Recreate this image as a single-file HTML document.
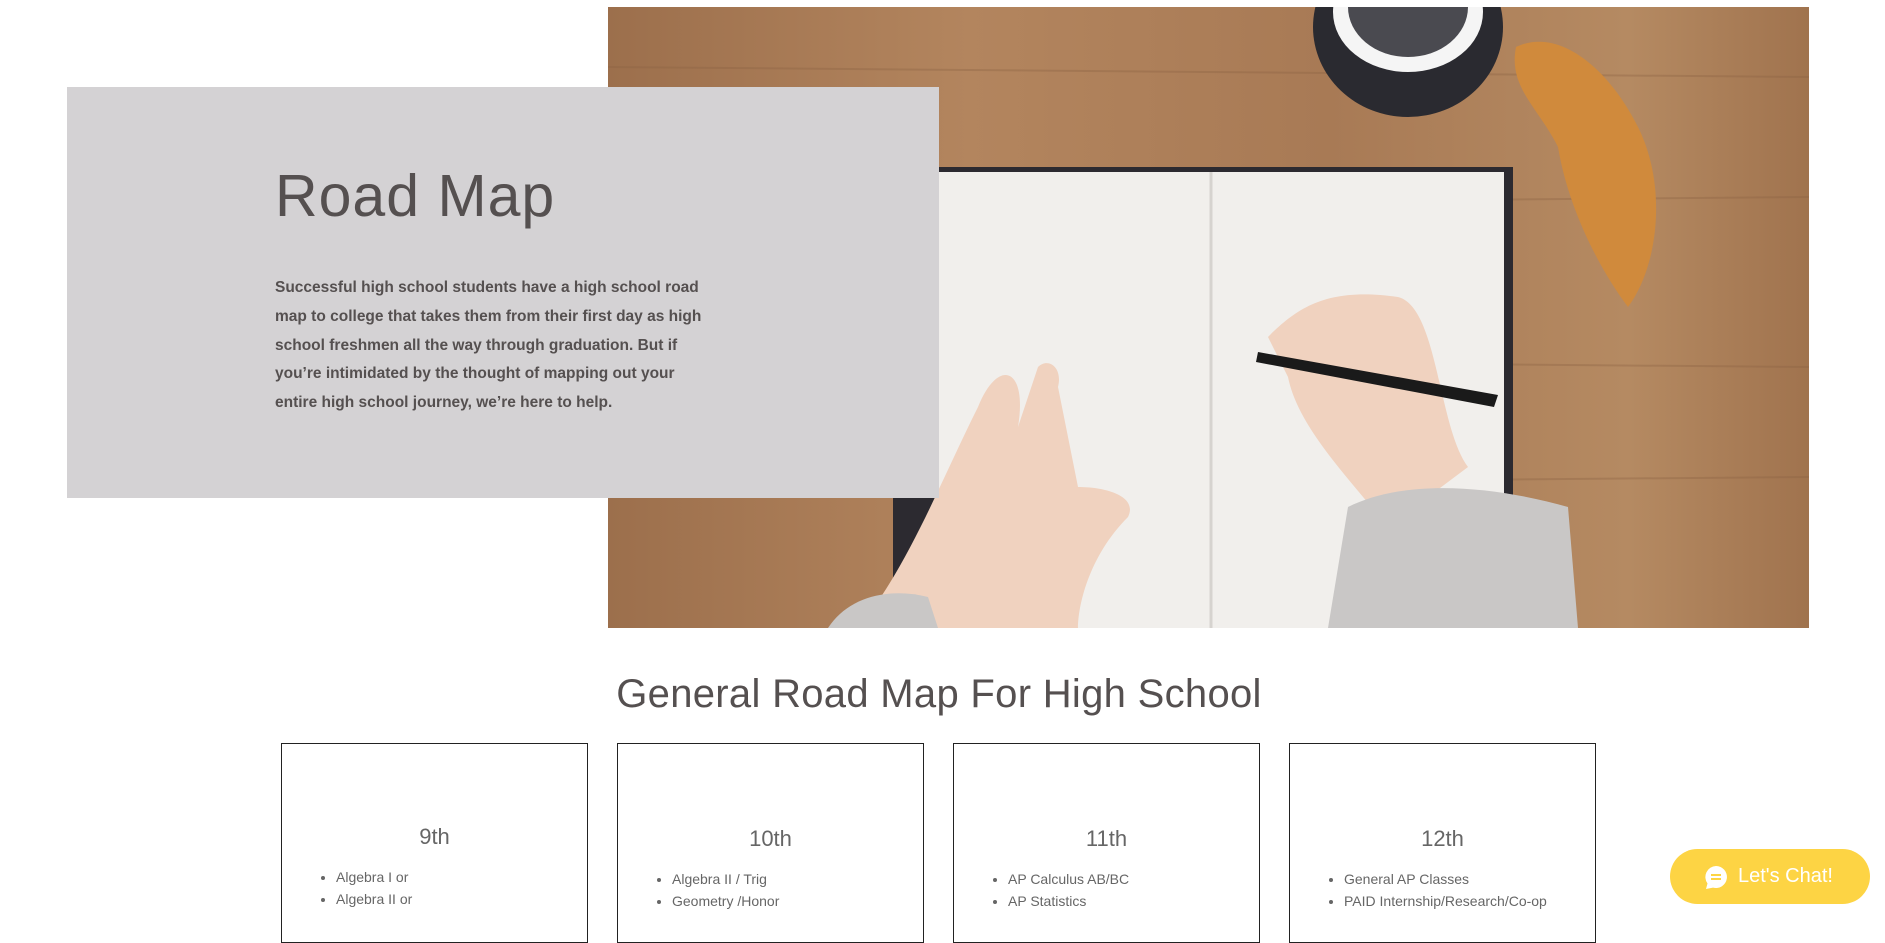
<!DOCTYPE html>
<html><head><meta charset="utf-8"><style>
body{margin:0;width:1885px;height:919px;overflow:hidden;background:#fff;position:relative;font-family:"Liberation Sans",sans-serif;}
.abs{position:absolute}
.img{left:608px;top:7px;width:1201px;height:621px;overflow:hidden;background:linear-gradient(90deg,#9c6f4c,#b3855e 30%,#a87a55 60%,#b58a62 85%,#a0734e)}
.gray{left:67px;top:87px;width:872px;height:411px;background:#d4d2d4}
h1{position:absolute;left:275px;top:162px;margin:0;font-weight:300;font-size:59px;color:#555050;letter-spacing:1px}
.p{left:275px;top:274px;width:432px;font-size:15.5px;line-height:28.75px;font-weight:bold;color:#555050}
h2{position:absolute;left:606px;width:666px;text-align:center;top:672px;margin:0;font-weight:normal;font-size:40px;color:#555050;letter-spacing:0.3px;white-space:nowrap}
.box{top:743px;width:307px;height:200px;border:1px solid #222;box-sizing:border-box}
.box .t{position:absolute;top:80px;width:100%;text-align:center;font-size:22px;color:#666}
.box ul{position:absolute;top:122px;left:40px;margin:0;padding-left:14px;font-size:14px;color:#666;line-height:22px}
.chat{left:1670px;top:849px;width:200px;height:55px;border-radius:28px;background:#fdd444;color:#fff;font-size:20px;line-height:55px}
</style></head><body>
<div class="abs img">
<svg width="1201" height="621" viewBox="0 0 1201 621">
<g stroke="#8b6243" stroke-width="2" opacity=".35"><line x1="0" y1="60" x2="1201" y2="70"/><line x1="0" y1="200" x2="1201" y2="190"/><line x1="0" y1="350" x2="1201" y2="360"/><line x1="0" y1="480" x2="1201" y2="470"/></g>
<ellipse cx="800" cy="20" rx="95" ry="90" fill="#2a2a30"/>
<ellipse cx="800" cy="5" rx="75" ry="60" fill="#f5f5f5"/>
<ellipse cx="800" cy="0" rx="60" ry="50" fill="#4a4a50"/>
<path d="M908 40 C950 20 1000 60 1030 120 C1060 180 1050 260 1020 300 C990 260 960 200 950 140 C930 100 900 80 908 40Z" fill="#d08a3c"/>
<rect x="285" y="160" width="620" height="461" fill="#2c2a30"/>
<rect x="330" y="165" width="566" height="456" fill="#f1efec"/>
<line x1="603" y1="165" x2="603" y2="621" stroke="#d6d3cf" stroke-width="3"/>
<path d="M250 621 C300 560 330 480 370 400 C390 350 420 360 410 420 L430 360 C440 350 455 360 450 380 L470 480 C500 480 530 490 520 510 C480 550 470 600 470 621Z" fill="#f0d2bf"/>
<path d="M660 330 C690 300 720 280 790 290 C830 300 830 420 860 460 L780 520 C740 470 690 420 680 370Z" fill="#f0d2bf"/>
<path d="M650 345 L890 388 L886 400 L648 355Z" fill="#1a1a1a"/>
<path d="M740 500 C800 470 890 480 960 500 L970 621 L720 621Z" fill="#c9c7c6"/>
<path d="M220 621 C240 590 280 580 320 590 L330 621Z" fill="#c9c7c6"/>
</svg>
</div>
<div class="abs gray"></div>
<h1>Road Map</h1>
<div class="abs p">Successful high school students have a high school road map to college that takes them from their first day as high school freshmen all the way through graduation. But if you’re intimidated by the thought of mapping out your entire high school journey, we’re here to help.</div>
<h2>General Road Map For High School</h2>
<div class="abs box" style="left:281px"><div class="t">9th</div><ul><li>Algebra I or</li><li>Algebra II or</li></ul></div>
<div class="abs box" style="left:617px"><div class="t" style="top:82px">10th</div><ul style="top:124px"><li>Algebra II / Trig</li><li>Geometry /Honor</li></ul></div>
<div class="abs box" style="left:953px"><div class="t" style="top:82px">11th</div><ul style="top:124px"><li>AP Calculus AB/BC</li><li>AP Statistics</li></ul></div>
<div class="abs box" style="left:1289px"><div class="t" style="top:82px">12th</div><ul style="top:124px"><li>General AP Classes</li><li>PAID Internship/Research/Co-op</li></ul></div>
<div class="abs chat"><svg class="abs" style="left:34px;top:16px" width="24" height="24" viewBox="0 0 24 24"><path d="M12 1a11 11 0 1 1-3 21.6L2 24l1.5-5.5A11 11 0 0 1 12 1z" fill="#fff"/><rect x="7" y="9" width="10" height="2" fill="#fdd444"/><rect x="7" y="13" width="10" height="2" fill="#fdd444"/></svg><span class="abs" style="left:68px">Let's Chat!</span></div>
</body></html>
